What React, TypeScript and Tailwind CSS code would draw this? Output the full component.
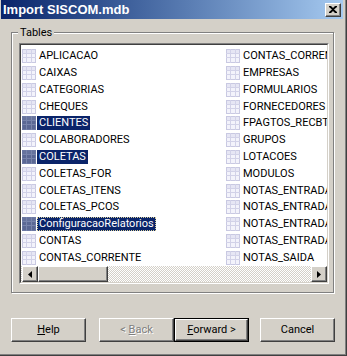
import React from "react";

const left = [
  "APLICACAO",
  "CAIXAS",
  "CATEGORIAS",
  "CHEQUES",
  "CLIENTES",
  "COLABORADORES",
  "COLETAS",
  "COLETAS_FOR",
  "COLETAS_ITENS",
  "COLETAS_PCOS",
  "ConfiguracaoRelatorios",
  "CONTAS",
  "CONTAS_CORRENTE",
];

const right = [
  "CONTAS_CORRENTE_MOV",
  "EMPRESAS",
  "FORMULARIOS",
  "FORNECEDORES",
  "FPAGTOS_RECBTOS",
  "GRUPOS",
  "LOTACOES",
  "MODULOS",
  "NOTAS_ENTRADA",
  "NOTAS_ENTRADA_ITENS",
  "NOTAS_ENTRADA_PARC",
  "NOTAS_ENTRADA_PCOS",
  "NOTAS_SAIDA",
];

const selected = ["CLIENTES", "COLETAS", "ConfiguracaoRelatorios"];

const TableIcon = ({ active }: { active: boolean }) => (
  <svg width="14" height="14" viewBox="0 0 14 14" className="shrink-0">
    <rect x="0.5" y="0.5" width="13" height="13" fill={active ? "#5b6894" : "#f3f3fb"} stroke={active ? "#6a77a3" : "#c9c9e2"} />
    <rect x="1" y="1" width="12" height="3" fill={active ? "#66739d" : "#e6e6f4"} />
    <g stroke={active ? "#7884ac" : "#d2d2e8"}>
      <line x1="0" y1="4.5" x2="14" y2="4.5" />
      <line x1="0" y1="8.5" x2="14" y2="8.5" />
      <line x1="4.5" y1="0" x2="4.5" y2="14" />
      <line x1="9.5" y1="0" x2="9.5" y2="14" />
    </g>
  </svg>
);

const Row = ({ name }: { name: string }) => {
  const on = selected.includes(name);
  const focus = name === "ConfiguracaoRelatorios";
  return (
    <div className="h-[17px] flex items-center">
      <TableIcon active={on} />
      <span
        className={`ml-[1px] px-[2px] h-[14px] leading-[14px] whitespace-nowrap ${
          on ? "bg-[#0a246a] text-white" : "text-black"
        } ${focus ? "outline outline-1 outline-dotted outline-[#d8cf9a] -outline-offset-1" : ""}`}
      >
        {name}
      </span>
    </div>
  );
};

const raised =
  "border border-t-white border-l-white border-r-[#404040] border-b-[#404040] shadow-[inset_-1px_-1px_0_#808080]";

const Btn = ({ children, def, disabled }: { children: React.ReactNode; def?: boolean; disabled?: boolean }) => (
  <div className={`w-[75px] h-[24px] ${def ? "border border-black" : ""}`}>
    <div
      className={`w-full h-full bg-[#d4d0c8] flex items-center justify-center ${raised} ${
        disabled ? "text-[#808080] [text-shadow:1px_1px_0_#fff]" : "text-black"
      }`}
    >
      {children}
    </div>
  </div>
);

export default function App() {
  return (
    <div className="w-[347px] h-[356px] bg-[#d4d0c8] pl-[1px] pr-[4px] flex flex-col font-['Roboto',Arial,sans-serif] text-[11px] shadow-[inset_-1px_-1px_0_#404040,inset_-2px_-2px_0_#808080] overflow-hidden select-none">
      {/* title bar */}
      <div className="h-[19px] shrink-0 flex items-center bg-gradient-to-r from-[#0a246a] to-[#a6caf0] pl-[2px] pr-[2px]">
        <span className="text-white font-bold text-[13px] leading-none font-['Liberation_Sans',Arial,sans-serif]">
          Import SISCOM.mdb
        </span>
        <div className={`ml-auto w-[16px] h-[14px] bg-[#d4d0c8] flex items-center justify-center ${raised}`}>
          <svg width="8" height="7" viewBox="0 0 8 7">
            <path d="M0 0h2l2 2 2-2h2v1L5 3.5 8 6v1H6L4 5 2 7H0V6l3-2.5L0 1z" fill="#000" />
          </svg>
        </div>
      </div>

      {/* group box */}
      <div className="relative ml-[10px] mt-[13px] w-[323px] h-[261px] border border-[#808080] shadow-[1px_1px_0_#fff,inset_1px_1px_0_#fff]">
        <span className="absolute -top-[7px] left-[6px] px-[2px] bg-[#d4d0c8] leading-[14px] text-black">Tables</span>

        {/* list box */}
        <div className="ml-[7px] mt-[10px] w-[310px] h-[241px] border border-t-[#808080] border-l-[#808080] border-r-white border-b-white">
          <div className="w-full h-full border border-t-[#404040] border-l-[#404040] border-r-[#d4d0c8] border-b-[#d4d0c8] bg-white flex flex-col">
            <div className="h-[221px] overflow-hidden pt-[3px] pl-[1px] flex">
              <div className="w-[204px] shrink-0 flex flex-col">
                {left.map((n) => (
                  <Row key={n} name={n} />
                ))}
              </div>
              <div className="w-[150px] shrink-0 flex flex-col">
                {right.map((n) => (
                  <Row key={n} name={n} />
                ))}
              </div>
            </div>

            {/* horizontal scrollbar */}
            <div className="h-[16px] shrink-0 flex pl-[1px] bg-[repeating-conic-gradient(#ffffff_0_25%,#d4d0c8_0_50%)] bg-[length:2px_2px]">
              <div className={`w-[16px] h-[16px] bg-[#d4d0c8] flex items-center justify-center ${raised}`}>
                <svg width="4" height="7" viewBox="0 0 4 7">
                  <path d="M4 0v7L0 3.5z" fill="#000" />
                </svg>
              </div>
              <div className={`w-[70px] h-[16px] bg-[#d4d0c8] ${raised}`} />
              <div className={`ml-auto w-[16px] h-[16px] bg-[#d4d0c8] flex items-center justify-center ${raised}`}>
                <svg width="4" height="7" viewBox="0 0 4 7">
                  <path d="M0 0v7l4-3.5z" fill="#000" />
                </svg>
              </div>
            </div>
          </div>
        </div>
      </div>

      {/* buttons */}
      <div className="mt-[25px] ml-[10px] flex">
        <Btn>
          <span>
            <u>H</u>elp
          </span>
        </Btn>
        <div className="ml-[13px]">
          <Btn disabled>
            <span>
              &lt; <u>B</u>ack
            </span>
          </Btn>
        </div>
        <Btn def>
          <span>
            <u>F</u>orward &gt;
          </span>
        </Btn>
        <div className="ml-[11px]">
          <Btn>
            <span>Cancel</span>
          </Btn>
        </div>
      </div>
    </div>
  );
}
